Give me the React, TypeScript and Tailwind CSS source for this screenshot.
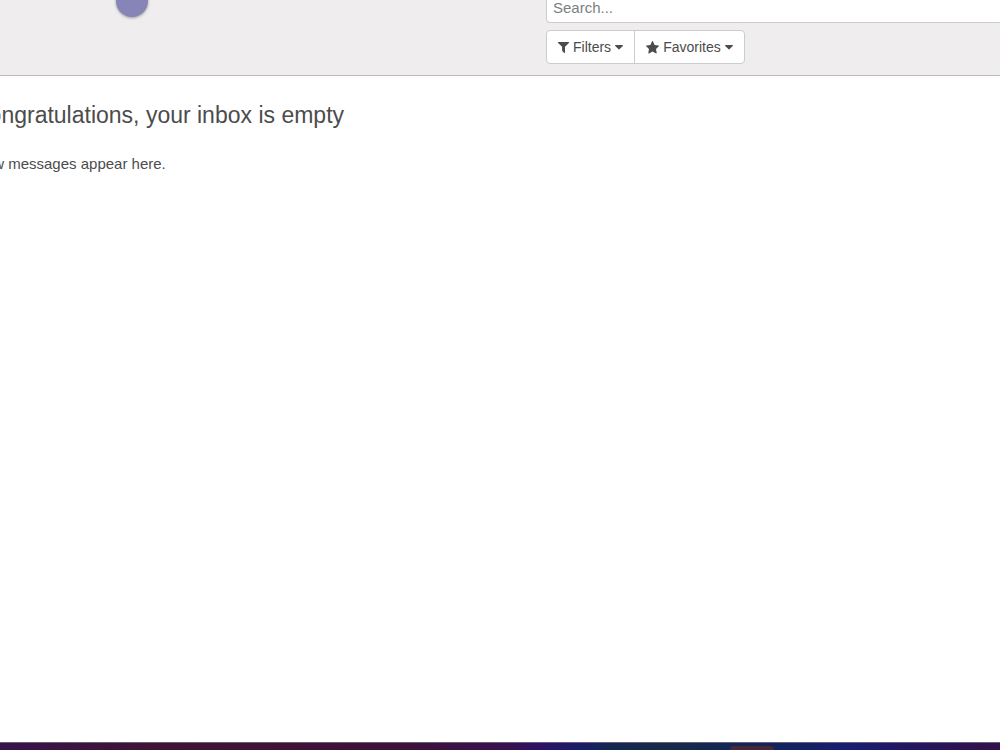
import { useState } from 'react'

function FilterIcon() {
  return (
    <svg viewBox="0 0 11 11" className="h-[11px] w-[11px]" fill="currentColor" aria-hidden="true">
      <path d="M.5 0h10c.5 0 .7.5.4.9L7 4.8v5.7c0 .4-.5.6-.8.4L4.3 9a.5.5 0 0 1-.2-.4V4.8L.1.9C-.2.5.1 0 .5 0Z" />
    </svg>
  )
}

function StarIcon() {
  return (
    <svg viewBox="0 0 13 13" className="h-[13px] w-[13px]" fill="currentColor" aria-hidden="true">
      <path d="M6.5 0c.2 0 .4.2.5.4l1.6 3.5 3.9.6c.5.1.6.5.3.8L10 8l.7 3.9c.1.5-.2.7-.6.5l-3.6-1.8-3.5 1.8c-.4.2-.8 0-.7-.5L3 8 .2 5.3c-.3-.3-.2-.7.3-.8l3.9-.6L6 .4c.1-.2.3-.4.5-.4Z" />
    </svg>
  )
}

function CaretIcon() {
  return (
    <svg viewBox="0 0 8 5" className="mt-px h-[5px] w-2" fill="currentColor" aria-hidden="true">
      <path d="M.6 0h6.8c.5 0 .8.5.4.9L4.4 4.3c-.2.3-.6.3-.8 0L.2.9C-.2.5.1 0 .6 0Z" />
    </svg>
  )
}

const menus = [
  { label: 'Filters', icon: FilterIcon },
  { label: 'Favorites', icon: StarIcon },
]

export default function App() {
  const [query, setQuery] = useState('')

  return (
    <div className="flex min-h-screen flex-col overflow-hidden bg-white font-['Liberation_Sans',Arial,sans-serif] text-[#4c4c4c]">
      {/* Control panel */}
      <header className="grid grid-cols-[546fr_454fr] border-b border-[#bcbabb] bg-[#efedee] pb-[11px]">
        <div className="pl-[116px]">
          <div className="-mt-[15px] size-8 rounded-full bg-[#8784b8] shadow-[0_1px_3px_rgba(0,0,0,0.35)]" />
        </div>
        <div>
          <input
            type="search"
            aria-label="Search"
            placeholder="Search..."
            value={query}
            onChange={e => setQuery(e.target.value)}
            className="-mt-2 block h-[31px] w-full rounded-l border border-r-0 border-[#cccccc] bg-white px-1.5 text-[15px] outline-none placeholder:text-[#7b8080]"
          />
          <div className="mt-[7px] inline-flex h-[34px] divide-x divide-[#cccccc] rounded border border-[#cccccc] bg-white align-top">
            {menus.map(({ label, icon: Icon }) => (
              <button key={label} type="button" className="flex items-center gap-1 px-[11px] text-sm">
                <Icon />
                {label}
                <CaretIcon />
              </button>
            ))}
          </div>
        </div>
      </header>

      {/* Inbox */}
      <main className="flex-1 pt-6">
        <h1 className="-ml-7 text-[23px] leading-[30px] whitespace-nowrap">Congratulations, your inbox is empty</h1>
        <p className="-ml-[26px] mt-[22px] text-[15px] leading-6 whitespace-nowrap">New messages appear here.</p>
      </main>

      {/* Taskbar */}
      <footer className="h-2 border-t border-[#6d5f7c] bg-[linear-gradient(to_right,#36134a_0%,#3f1433_16%,#3d1238_40%,#37124f_51%,#2d1266_54%,#181e68_58%,#132850_61%,#162948_67%,#12235e_78%,#171e72_85%,#25155e_92%,#331246_100%)]">
        <div className="mt-[3px] ml-[73%] h-1 w-11 rounded-t bg-[#482737]" />
      </footer>
    </div>
  )
}
